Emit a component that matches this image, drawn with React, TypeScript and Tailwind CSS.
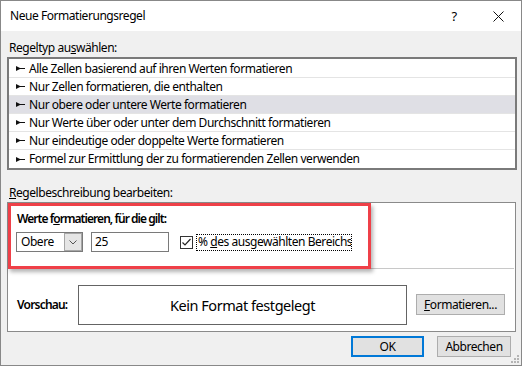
import React from "react";

const rules = [
  "Alle Zellen basierend auf ihren Werten formatieren",
  "Nur Zellen formatieren, die enthalten",
  "Nur obere oder untere Werte formatieren",
  "Nur Werte über oder unter dem Durchschnitt formatieren",
  "Nur eindeutige oder doppelte Werte formatieren",
  "Formel zur Ermittlung der zu formatierenden Zellen verwenden",
];

function RuleArrow() {
  return (
    <svg width="9" height="5" viewBox="0 0 9 5" className="mr-[4px] shrink-0">
      <polygon points="0,0 4,2 9,2 9,3 4,3 0,5" fill="#111" />
    </svg>
  );
}

function ResizeGrip() {
  const dots = [
    [6, 0],
    [3, 3],
    [6, 3],
    [0, 6],
    [3, 6],
    [6, 6],
  ];
  return (
    <svg width="8" height="8" viewBox="0 0 8 8" className="absolute right-[2px] bottom-[2px]">
      {dots.map(([x, y], i) => (
        <rect key={i} x={x} y={y} width="2" height="2" fill="#b4b4b4" />
      ))}
    </svg>
  );
}

export default function App() {
  const selected = 2;

  return (
    <div className="w-[524px] h-[366px] bg-white text-[12px] text-black font-['Noto_Sans',sans-serif] leading-[16px] tracking-[-0.45px]">
      <div className="relative w-[522px] h-[366px] border border-[#888] flex flex-col">
        {/* title bar */}
        <div className="h-[30px] bg-white flex items-center pl-[9px]">
          <span>Neue Formatierungsregel</span>
          <div className="ml-auto flex h-full">
            <div className="w-[46px] flex items-center justify-center text-[13px] pl-[4px]">?</div>
            <div className="w-[46px] flex items-center justify-center">
              <svg width="11" height="11" viewBox="0 0 11 11">
                <path d="M0.5 0.5 L10.5 10.5 M10.5 0.5 L0.5 10.5" stroke="#111" strokeWidth="1" />
              </svg>
            </div>
          </div>
        </div>

        <div className="flex-1 bg-[#f0f0f0] flex flex-col pl-[6px] pr-[4px] pt-[9px]">
          <div className="h-[16px] pl-[2px]">
            Regeltyp au<u>s</u>wählen:
          </div>

          <div className="mt-[1px] border-2 border-[#7a7a7a] bg-white pt-[1px]">
            {rules.map((r, i) => (
              <div
                key={r}
                className={`h-[18px] flex items-center pl-[7px] ${
                  i < rules.length - 1 ? "border-b border-[#e4e4e4]" : ""
                } ${i === selected ? "bg-[#dfdfe5]" : ""}`}
              >
                <RuleArrow />
                <span>{r}</span>
              </div>
            ))}
          </div>

          <div className="mt-[15px] h-[16px] pl-[2px]">
            <u>R</u>egelbeschreibung bearbeiten:
          </div>

          <div className="relative mt-[1px] mr-[1px] border border-[#8a8a8a] bg-white">
            <div className="h-[65px] pl-[8px] pt-[8px]">
              <div className="font-semibold tracking-[-0.95px] ml-[1px] h-[16px]">
                Werte f<u>o</u>rmatieren, für die gilt:
              </div>
              <div className="mt-[5px] flex items-center h-[20px]">
                <div className="w-[67px] h-[20px] border border-[#7a7a7a] flex items-center">
                  <span className="pl-[4px] flex-1">Obere</span>
                  <div className="w-[18px] h-[18px] border border-[#a6a6a6] bg-[#e5e5e5] flex items-center justify-center">
                    <svg width="8" height="5" viewBox="0 0 8 5">
                      <polyline points="0.5,0.5 4,4 7.5,0.5" fill="none" stroke="#555" strokeWidth="1" />
                    </svg>
                  </div>
                </div>
                <div className="ml-[8px] w-[78px] h-[20px] border border-[#7a7a7a] flex items-center pl-[3px]">
                  25
                </div>
                <div className="ml-[11px] w-[13px] h-[13px] border border-[#333] bg-white flex items-center justify-center">
                  <svg width="11" height="11" viewBox="0 0 11 11">
                    <polyline points="1.5,5.5 4,8 9.5,2" fill="none" stroke="#222" strokeWidth="1.2" />
                  </svg>
                </div>
                <div className="ml-[3px] w-[156px] h-[17px] border border-dotted border-black flex items-center pl-[1px] whitespace-nowrap overflow-hidden">
                  %&nbsp;<u>d</u>es ausgewählten Bereichs
                </div>
              </div>
            </div>
            <div className="h-[1px] bg-[#c8c8c8] mx-[1px]" />
            <div className="h-[62px] flex items-start pt-[16px] pl-[9px] pr-[10px]">
              <div className="w-[61px] h-[40px] flex items-center font-semibold tracking-[-0.8px]">Vorschau:</div>
              <div className="w-[329px] h-[40px] border border-[#646464] flex items-center justify-center text-[14.5px]">
                Kein Format festgelegt
              </div>
              <div className="ml-auto mt-[9px] w-[89px] h-[21px] border border-[#adadad] bg-[#e1e1e1] flex items-center justify-center">
                <span>
                  <u>F</u>ormatieren...
                </span>
              </div>
            </div>
            <div className="absolute left-0 top-0 w-[363px] h-[66px] border-[3px] border-[#ef4048] shadow-[2px_3px_4px_rgba(0,0,0,0.3)]" />
          </div>

          <div className="mt-[4px] flex justify-end gap-[13px] mr-[6px]">
            <div className="w-[73px] h-[21px] border-2 border-[#0078d7] bg-[#e1e1e1] flex items-center justify-center">
              OK
            </div>
            <div className="w-[74px] h-[21px] border border-[#adadad] bg-[#e1e1e1] flex items-center justify-center">
              Abbrechen
            </div>
          </div>
        </div>
        <ResizeGrip />
      </div>
    </div>
  );
}
